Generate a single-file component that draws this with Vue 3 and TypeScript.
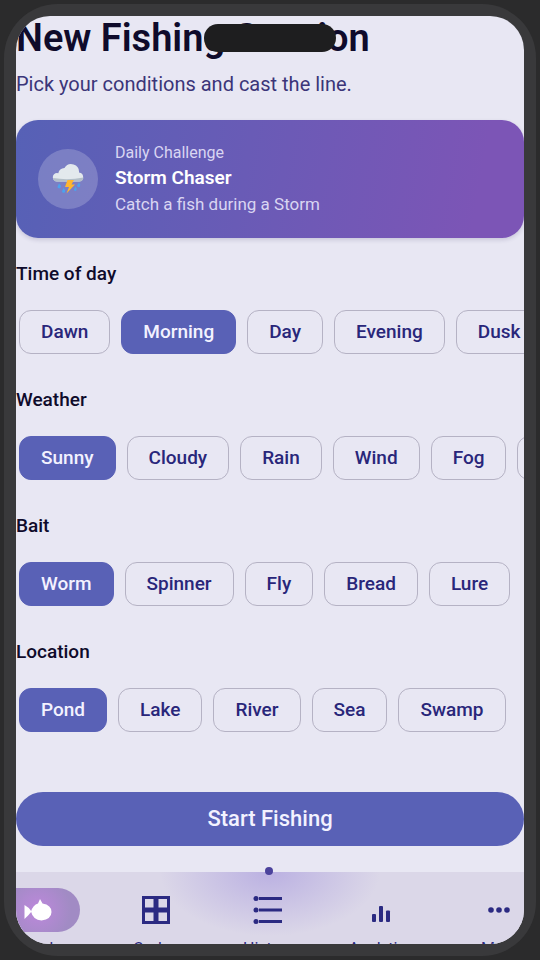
<script setup lang="ts">
import { reactive } from 'vue'

interface Group {
  name: string
  options: string[]
}

const groups: Group[] = [
  { name: 'Time of day', options: ['Dawn', 'Morning', 'Day', 'Evening', 'Dusk'] },
  { name: 'Weather', options: ['Sunny', 'Cloudy', 'Rain', 'Wind', 'Fog', 'Storm'] },
  { name: 'Bait', options: ['Worm', 'Spinner', 'Fly', 'Bread', 'Lure'] },
  { name: 'Location', options: ['Pond', 'Lake', 'River', 'Sea', 'Swamp'] },
]

const selected = reactive<Record<string, string>>({
  'Time of day': 'Morning',
  Weather: 'Sunny',
  Bait: 'Worm',
  Location: 'Pond',
})
</script>

<template>
  <div class="stage">
    <div class="device">
      <span class="island"></span>
      <div class="screen">
        <main class="content">
          <header>
            <h1>New Fishing Session</h1>
            <p class="lead">Pick your conditions and cast the line.</p>
          </header>

          <section class="challenge">
            <div class="badge">
              <svg viewBox="0 0 32 32" width="32" height="32" aria-hidden="true">
                <g fill="#4ba3ee">
                  <path d="M7 20.500q2.500 2 1.500 4a1.600 1.600 0 0 1-3-.8z" />
                  <path d="M11.500 25q2.500 2 1.500 4a1.600 1.600 0 0 1-3-.8z" />
                  <path d="M27 19.500q2 2 1 3.800a1.600 1.600 0 0 1-3-.8z" />
                  <path d="M23.500 23.500q2 2 1 3.500a1.300 1.300 0 0 1-2.500-.8z" />
                </g>
                <path d="M5 18.500a4.200 4.200 0 0 1 0-8.400q.8 0 1.300.2A6.500 6.500 0 0 1 12.500 5 7.800 7.800 0 0 1 27 9.600a4.500 4.500 0 0 1 .5 8.900z" fill="#e3e9ed" />
                <path d="M1 15q15 2.500 30.500-.5-.5 4-4 4H5Q1.500 18.500 1 15z" fill="#b3bfc8" />
                <path d="M15.500 17h6.500l-2.500 4.500h3.500L14.500 30.500l2.500-6.500h-4z" fill="#ffb62e" />
              </svg>
            </div>
            <div class="challenge-text">
              <span class="eyebrow">Daily Challenge</span>
              <strong>Storm Chaser</strong>
              <span class="detail">Catch a fish during a Storm</span>
            </div>
          </section>

          <section v-for="group in groups" :key="group.name" class="group">
            <h2>{{ group.name }}</h2>
            <div class="chips">
              <button
                v-for="option in group.options"
                :key="option"
                type="button"
                class="chip"
                :class="{ active: selected[group.name] === option }"
                :aria-pressed="selected[group.name] === option"
                @click="selected[group.name] = option"
              >{{ option }}</button>
            </div>
          </section>

          <button type="button" class="start">Start Fishing</button>
        </main>

        <nav class="tabs">
          <div class="tab-row">
            <span class="marker"></span>
            <a href="#catch" class="tab">
              <span class="icon pill">
                <svg viewBox="0 0 28 22" width="28" height="22" fill="#fff" aria-hidden="true">
                  <path d="M.5 6q4 2 7 6.500-3 4-7 7.500z" />
                  <path d="M7 12.500Q9 6 14 4.500L16 0l2.500 4.500Q27.500 6 27.500 13T17.500 21.500Q9 21 7 12.500z" />
                </svg>
              </span>
              <span>Catch</span>
            </a>
            <a href="#codex" class="tab">
              <span class="icon">
                <svg viewBox="0 0 28 28" width="28" height="28" fill="none" stroke="currentColor" stroke-width="3" aria-hidden="true">
                  <path d="M1.500 1.500h11.500v11.500h-11.500zM15 1.500h11.500v11.500h-11.500zM1.500 15h11.500v11.500h-11.500zM15 15h11.500v11.500h-11.500z" />
                </svg>
              </span>
              <span>Codex</span>
            </a>
            <a href="#history" class="tab">
              <span class="icon">
                <svg viewBox="0 0 30 28" width="30" height="28" fill="currentColor" aria-hidden="true">
                  <circle cx="3" cy="2.500" r="2.500" /><circle cx="3" cy="14" r="2.500" /><circle cx="3" cy="25.500" r="2.500" />
                  <path d="M6 1h23v3H6zM6 12.500h23v3H6zM6 24h23v3H6z" />
                </svg>
              </span>
              <span>History</span>
            </a>
            <a href="#analytics" class="tab">
              <span class="icon">
                <svg viewBox="0 0 28 28" width="28" height="28" fill="currentColor" aria-hidden="true">
                  <rect x="5" y="18" width="4" height="8" rx="1" /><rect x="12" y="10" width="4" height="16" rx="1" /><rect x="19" y="14.500" width="4" height="11.500" rx="1" />
                </svg>
              </span>
              <span>Analytics</span>
            </a>
            <a href="#more" class="tab">
              <span class="icon">
                <svg viewBox="0 0 28 28" width="28" height="28" fill="currentColor" aria-hidden="true">
                  <circle cx="6" cy="14" r="2.800" /><circle cx="14" cy="14" r="2.800" /><circle cx="22" cy="14" r="2.800" />
                </svg>
              </span>
              <span>More</span>
            </a>
          </div>
        </nav>
      </div>
    </div>
  </div>
</template>

<style>
body {
  margin: 0;
  background: #2b2b2c;
}
</style>

<style scoped>
* {
  box-sizing: border-box;
}

.stage {
  display: flex;
  height: 100vh;
  padding: 4px;
  background: #2b2b2c;
  font-family: Roboto, 'Liberation Sans', sans-serif;
}

.device {
  position: relative;
  flex: 1;
  min-width: 0;
  display: flex;
  padding: 12px;
  border-radius: 54px;
  background: #39393b;
}

.island {
  position: absolute;
  z-index: 2;
  top: 20px;
  left: 50%;
  width: 132px;
  height: 28px;
  transform: translateX(-50%);
  border-radius: 14px;
  background: #1e1e1f;
}

.screen {
  flex: 1;
  min-width: 0;
  display: flex;
  flex-direction: column;
  overflow: hidden;
  border-radius: 34px;
  background: #e8e7f3;
  color: #0f0b2b;
}

.content {
  flex: 1;
  min-height: 0;
  overflow: hidden;
}

h1 {
  margin: 0;
  font-size: 38px;
  line-height: 44px;
  font-weight: 600;
  white-space: nowrap;
}

.lead {
  margin: 12px 0 24px;
  font-size: 20px;
  line-height: 24px;
  color: #3b3579;
}

.challenge {
  display: flex;
  align-items: center;
  gap: 17px;
  height: 118px;
  padding: 0 22px;
  border-radius: 22px;
  background: linear-gradient(100deg, #5661b6, #7c55b6 90%);
  box-shadow: 0 2px 4px rgba(40, 30, 90, 0.16);
}

.badge {
  display: flex;
  align-items: center;
  justify-content: center;
  width: 60px;
  height: 60px;
  border-radius: 50%;
  background: rgba(255, 255, 255, 0.2);
}

.challenge-text {
  display: flex;
  flex-direction: column;
  color: #d9d5f2;
}

.eyebrow {
  font-size: 16px;
  line-height: 22px;
}

.challenge-text strong {
  font-size: 19px;
  line-height: 28px;
  font-weight: 600;
  color: #fff;
}

.detail {
  font-size: 17px;
  line-height: 24px;
}

.group {
  margin-top: 24px;
}

h2 {
  margin: 0;
  font-size: 19px;
  line-height: 24px;
  font-weight: 500;
}

.chips {
  display: flex;
  gap: 11px;
  padding: 24px 3px 10px;
  overflow-x: auto;
  scrollbar-width: none;
}

.chip {
  flex: none;
  height: 44px;
  padding: 0 21px;
  border: 1px solid #b5b2c4;
  border-radius: 12px;
  background: transparent;
  color: #29267a;
  font: 500 19px/24px Roboto, 'Liberation Sans', sans-serif;
}

.chip.active {
  border-color: #5961b6;
  background: #5961b6;
  color: #f3f2ff;
}

.start {
  display: block;
  width: 100%;
  height: 54px;
  margin-top: 50px;
  border: 0;
  border-radius: 27px;
  background: #5961b6;
  color: #f3f2ff;
  font: 500 22px/28px Roboto, 'Liberation Sans', sans-serif;
}

.tabs {
  flex: none;
  height: 72px;
  background:
    radial-gradient(ellipse 110px 64px at 50% 0, rgba(160, 145, 220, 0.55), transparent),
    #dbd7e8;
}

.tab-row {
  position: relative;
  display: grid;
  grid-template-columns: 12fr 11fr 11fr 11fr 12fr;
  margin: 0 -37px 0 -40px;
  padding-top: 16px;
}

.marker {
  position: absolute;
  top: -5px;
  left: 50%;
  width: 8px;
  height: 8px;
  transform: translateX(-50%);
  border-radius: 50%;
  background: #4b429c;
}

.tab {
  display: flex;
  flex-direction: column;
  align-items: center;
  gap: 7px;
  color: #2b2a82;
  font-size: 16px;
  line-height: 20px;
  text-decoration: none;
}

.icon {
  flex: none;
  display: flex;
  align-items: center;
  justify-content: center;
  width: 84px;
  height: 44px;
}

.pill {
  border-radius: 22px;
  background: radial-gradient(circle, #bd88dc, #a18bc4 70%);
}
</style>
